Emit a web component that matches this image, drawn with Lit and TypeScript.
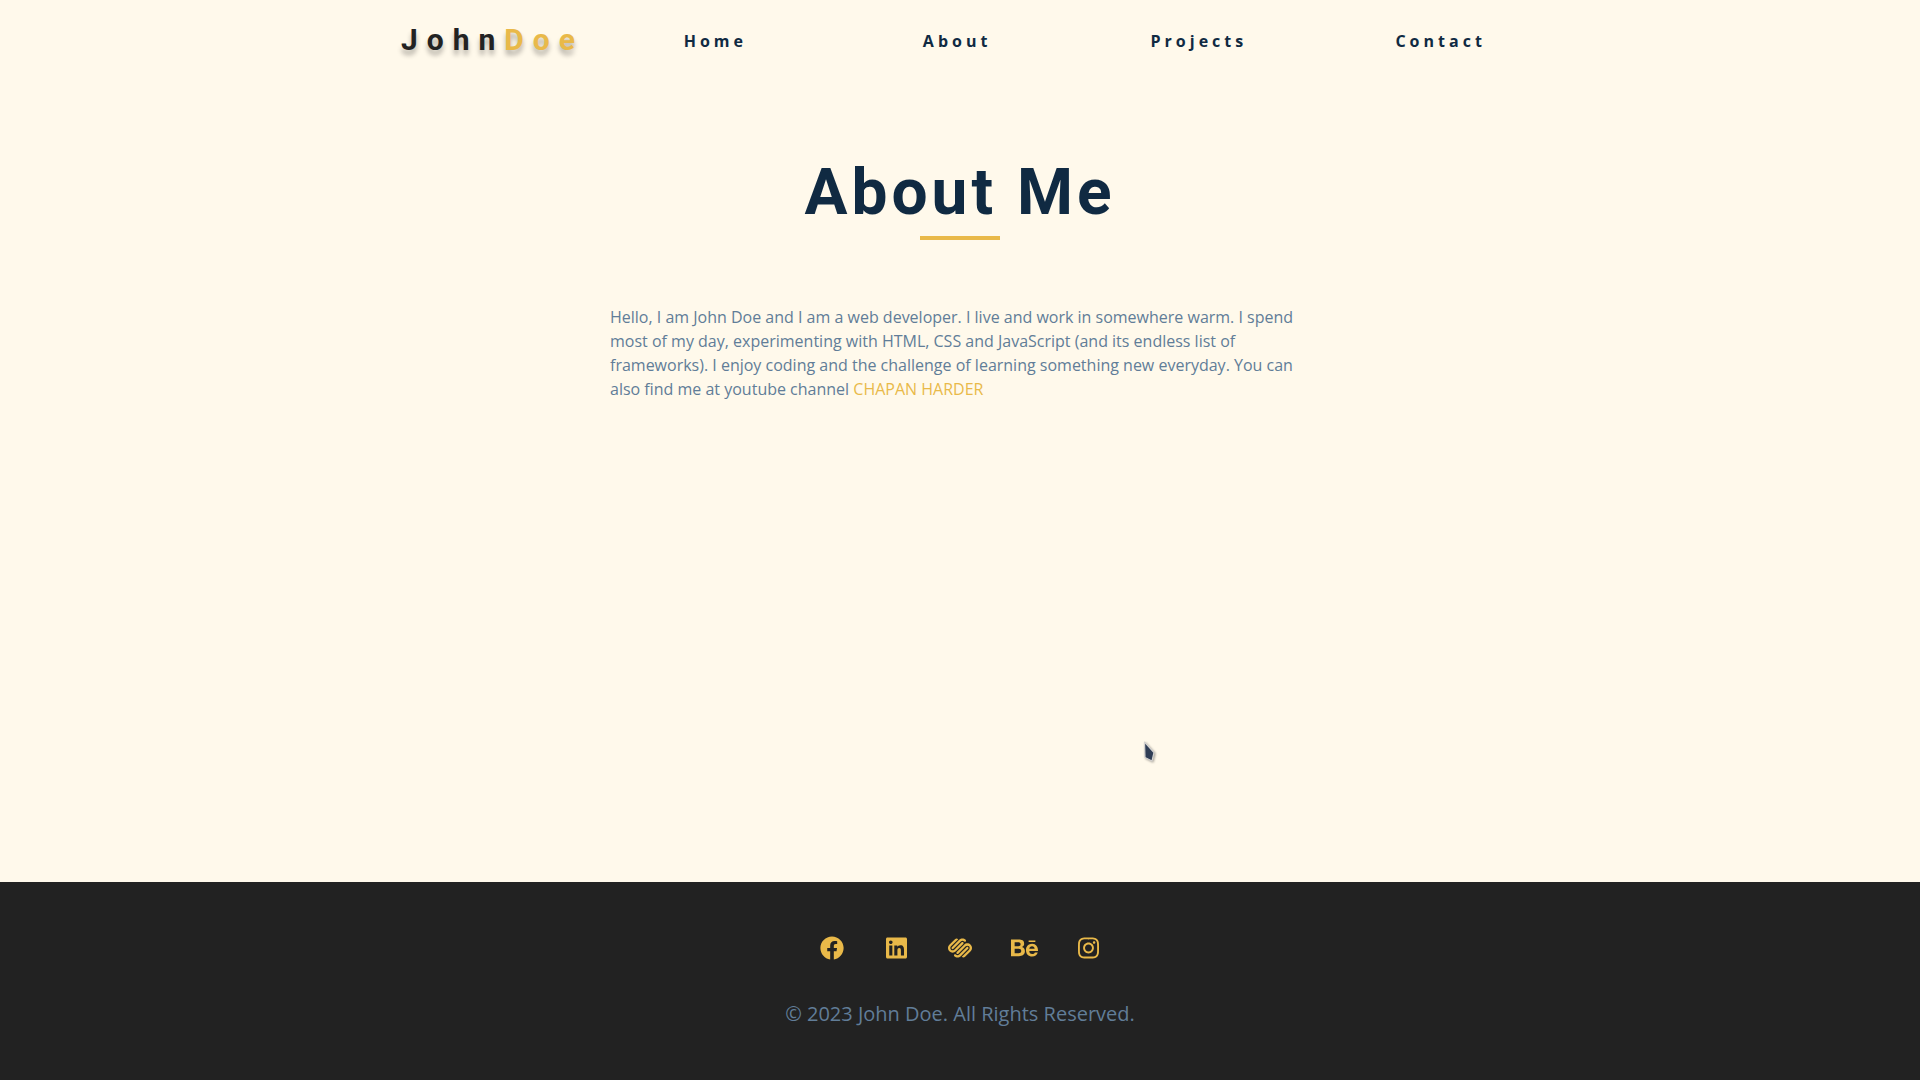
import { LitElement, html, css, svg } from "lit";
import { customElement } from "lit/decorators.js";

interface SocialLink {
  label: string;
  width: number;
  path: string;
}

const navLinks = ["Home", "About", "Projects", "Contact"];

const socialLinks: SocialLink[] = [
  {
    label: "Facebook",
    width: 512,
    path: "M504 256C504 119 393 8 256 8S8 119 8 256c0 123.78 90.69 226.38 209.25 245V327.69h-63V256h63v-54.64c0-62.15 37-96.48 93.67-96.48 27.14 0 55.52 4.84 55.52 4.84v61h-31.28c-30.8 0-40.41 19.12-40.41 38.73V256h68.78l-11 71.69h-57.78V501C413.31 482.38 504 379.78 504 256z",
  },
  {
    label: "LinkedIn",
    width: 448,
    path: "M416 32H31.9C14.3 32 0 46.5 0 64.3v383.4C0 465.5 14.3 480 31.9 480H416c17.6 0 32-14.5 32-32.3V64.3c0-17.8-14.4-32.3-32-32.3zM135.4 416H69V202.2h66.5V416zm-33.2-243c-21.3 0-38.5-17.3-38.5-38.5S80.9 96 102.2 96c21.2 0 38.5 17.3 38.5 38.5 0 21.3-17.2 38.5-38.5 38.5zm282.1 243h-66.4V312c0-24.8-.5-56.7-34.5-56.7-34.6 0-39.9 27-39.9 54.9V416h-66.4V202.2h63.7v29.2h.9c8.9-16.8 30.6-34.5 62.9-34.5 67.2 0 79.7 44.3 79.7 101.9V416z",
  },
  {
    label: "Squarespace",
    width: 512,
    path: "M186.12 343.34c-9.65 9.65-9.65 25.29 0 34.94 9.65 9.65 25.29 9.65 34.94 0L378.24 221.1c19.29-19.29 50.57-19.29 69.86 0s19.29 50.57 0 69.86L293.95 445.1c19.27 19.29 50.53 19.31 69.82.04l.04-.04 119.25-119.24c38.59-38.59 38.59-101.14 0-139.72-38.59-38.59-101.15-38.59-139.72 0l-157.22 157.2zm244.53-104.8c-9.65-9.65-25.29-9.65-34.93 0l-157.2 157.18c-19.27 19.29-50.53 19.31-69.82.05l-.05-.05c-9.64-9.64-25.27-9.65-34.92-.01l-.01.01c-9.65 9.64-9.66 25.28-.02 34.93l.02.02c38.58 38.57 101.14 38.57 139.72 0l157.2-157.2c9.65-9.65 9.65-25.29.01-34.93zm-261.99 87.33l157.18-157.18c9.64-9.65 9.64-25.29 0-34.94-9.64-9.64-25.27-9.64-34.91 0L133.72 290.93c-19.28 19.29-50.56 19.3-69.85.01l-.01-.01c-19.29-19.28-19.31-50.54-.03-69.84l.03-.03L218.03 66.89c-19.28-19.29-50.55-19.3-69.85-.02l-.02.02L28.93 186.14c-38.58 38.59-38.58 101.14 0 139.72 38.6 38.59 101.13 38.59 139.73.01zm-87.33-52.4c9.64 9.64 25.27 9.64 34.91 0l157.21-157.19c19.28-19.29 50.55-19.3 69.84-.02l.02.02c9.65 9.65 25.29 9.65 34.93 0 9.65-9.65 9.65-25.29 0-34.93-38.59-38.59-101.13-38.59-139.72 0L81.33 238.54c-9.65 9.64-9.65 25.28-.01 34.93h.01z",
  },
  {
    label: "Behance",
    width: 576,
    path: "M232 237.2c31.8-15.2 48.4-38.2 48.4-74 0-70.6-52.6-87.8-113.3-87.8H0v354.4h171.8c64.4 0 124.9-30.9 124.9-102.9 0-44.5-21.1-77.4-64.7-89.7zM77.9 135.9H151c28.1 0 53.4 7.9 53.4 40.5 0 30.1-19.7 42.2-47.5 42.2h-79v-82.7zm83.3 233.7H77.9V272h84.9c34.3 0 56 14.3 56 50.6 0 35.8-25.9 47-57.6 47zm358.5-240.7H376V94h143.7v34.9zM576 305.2c0-75.9-44.4-139.2-124.9-139.2-78.2 0-131.3 58.8-131.3 135.8 0 79.9 50.3 134.7 131.3 134.7 61.3 0 101-27.6 120.1-86.3H509c-6.7 21.9-34.3 33.5-55.7 33.5-41.3 0-63-24.2-63-65.3h185.1c.3-4.2.6-8.7.6-13.2zM390.4 274c2.3-33.7 24.7-54.8 58.5-54.8 35.4 0 53.2 20.8 56.2 54.8H390.4z",
  },
  {
    label: "Instagram",
    width: 448,
    path: "M224.1 141c-63.6 0-114.9 51.3-114.9 114.9s51.3 114.9 114.9 114.9S339 319.5 339 255.9 287.7 141 224.1 141zm0 189.6c-41.1 0-74.7-33.5-74.7-74.7s33.5-74.7 74.7-74.7 74.7 33.5 74.7 74.7-33.6 74.7-74.7 74.7zm146.4-194.3c0 14.9-12 26.8-26.8 26.8-14.9 0-26.8-12-26.8-26.8s12-26.8 26.8-26.8 26.8 12 26.8 26.8zm76.1 27.2c-1.7-35.9-9.9-67.7-36.2-93.9-26.2-26.2-58-34.4-93.9-36.2-37-2.1-147.9-2.1-184.9 0-35.8 1.7-67.6 9.9-93.9 36.1s-34.4 58-36.2 93.9c-2.1 37-2.1 147.9 0 184.9 1.7 35.9 9.9 67.7 36.2 93.9s58 34.4 93.9 36.2c37 2.1 147.9 2.1 184.9 0 35.9-1.7 67.7-9.9 93.9-36.2 26.2-26.2 34.4-58 36.2-93.9 2.1-37 2.1-147.8 0-184.8zM398.8 388c-7.8 19.6-22.9 34.7-42.6 42.6-29.5 11.7-99.5 9-132.1 9s-102.7 2.6-132.1-9c-19.6-7.8-34.7-22.9-42.6-42.6-11.7-29.5-9-99.5-9-132.1s-2.6-102.7 9-132.1c7.8-19.6 22.9-34.7 42.6-42.6 29.5-11.7 99.5-9 132.1-9s102.7-2.6 132.1 9c19.6 7.8 34.7 22.9 42.6 42.6 11.7 29.5 9 99.5 9 132.1s2.7 102.7-9 132.1z",
  },
];

@customElement("site-header")
class SiteHeader extends LitElement {
  static styles = css`
    :host {
      display: block;
    }
    .bar {
      display: grid;
      grid-template-columns: 190px 1fr;
      column-gap: 46px;
      align-items: center;
      max-width: 1118px;
      height: 80px;
      margin: 0 auto;
    }
    .logo {
      color: #222;
      font: 700 30px/40px Roboto, sans-serif;
      letter-spacing: 9px;
      text-decoration: none;
      text-shadow: 0 5px 5px rgba(0, 0, 0, 0.3);
    }
    .accent {
      color: #e9b949;
    }
    .links {
      display: grid;
      grid-template-columns: repeat(4, 1fr);
      column-gap: 85px;
      margin: 0;
      padding: 2px 0 0;
      list-style: none;
      text-align: center;
    }
    .link {
      color: #102a42;
      font: 700 16px/24px "Open Sans", sans-serif;
      letter-spacing: 4px;
      text-decoration: none;
    }
  `;

  render() {
    return html`
      <header class="bar">
        <a class="logo" href="#home">John<span class="accent">Doe</span></a>
        <nav aria-label="Main">
          <ul class="links">
            ${navLinks.map(
              (name) => html`<li><a class="link" href="#${name.toLowerCase()}">${name}</a></li>`
            )}
          </ul>
        </nav>
      </header>
    `;
  }
}

@customElement("site-footer")
class SiteFooter extends LitElement {
  static styles = css`
    :host {
      display: block;
    }
    .footer {
      display: flex;
      flex-direction: column;
      align-items: center;
      gap: 38px;
      padding: 54px 16px 50px;
      background: #222;
    }
    .icons {
      display: grid;
      grid-template-columns: repeat(5, 64px);
      margin: 0;
      padding: 0;
      list-style: none;
    }
    .social {
      display: flex;
      justify-content: center;
      color: #e9b949;
    }
    .icon {
      display: block;
      height: 24px;
      fill: currentColor;
    }
    .copyright {
      margin: 0;
      color: #617d98;
      font: 400 20px/32px "Open Sans", sans-serif;
    }
  `;

  render() {
    return html`
      <footer class="footer">
        <ul class="icons">
          ${socialLinks.map(
            (s) => html`<li>
              <a class="social" href="#${s.label.toLowerCase()}" aria-label=${s.label}>
                <svg class="icon" viewBox="0 0 ${s.width} 512" aria-hidden="true">
                  ${svg`<path d=${s.path}></path>`}
                </svg>
              </a>
            </li>`
          )}
        </ul>
        <p class="copyright">© 2023 John Doe. All Rights Reserved.</p>
      </footer>
    `;
  }
}

@customElement("app-root")
class AppRoot extends LitElement {
  static styles = css`
    :host {
      display: block;
    }
    .page {
      position: relative;
      display: flex;
      flex-direction: column;
      min-height: 100vh;
      background: #fff9eb;
    }
    .about {
      flex: 1;
      padding: 73px 16px 80px;
    }
    .title {
      margin: 0;
      color: #102a42;
      font: 700 64px/80px Roboto, sans-serif;
      letter-spacing: 4px;
      text-align: center;
    }
    .underline {
      width: 80px;
      height: 4px;
      margin: 3px auto 65px;
      background: #e9b949;
    }
    .text {
      max-width: 700px;
      margin: 0 auto;
      color: #617d98;
      font: 400 16px/24px "Open Sans", sans-serif;
    }
    .channel {
      color: #e9b949;
      text-decoration: none;
    }
    .pointer {
      position: absolute;
      left: 1142px;
      top: 739px;
      width: 18px;
      height: 28px;
      filter: drop-shadow(1px 1px 1px rgba(0, 0, 0, 0.35));
    }
  `;

  render() {
    return html`
      <div class="page">
        <site-header></site-header>
        <main class="about">
          <h1 class="title">About Me</h1>
          <div class="underline"></div>
          <p class="text">
            Hello, I am John Doe and I am a web developer. I live and work in somewhere warm. I
            spend most of my day, experimenting with HTML, CSS and JavaScript (and its endless list
            of frameworks). I enjoy coding and the challenge of learning something new everyday.
            You can also find me at youtube channel
            <a class="channel" href="#channel">CHAPAN HARDER</a>
          </p>
        </main>
        <site-footer></site-footer>
        <svg class="pointer" viewBox="0 0 18 28" aria-hidden="true">
          <path d="M2.5 3 12 13.5 10 22 3 18.5z" fill="#2f3d55" stroke="#d5d3d0" stroke-width="1.2" stroke-linejoin="round" />
        </svg>
      </div>
    `;
  }
}
